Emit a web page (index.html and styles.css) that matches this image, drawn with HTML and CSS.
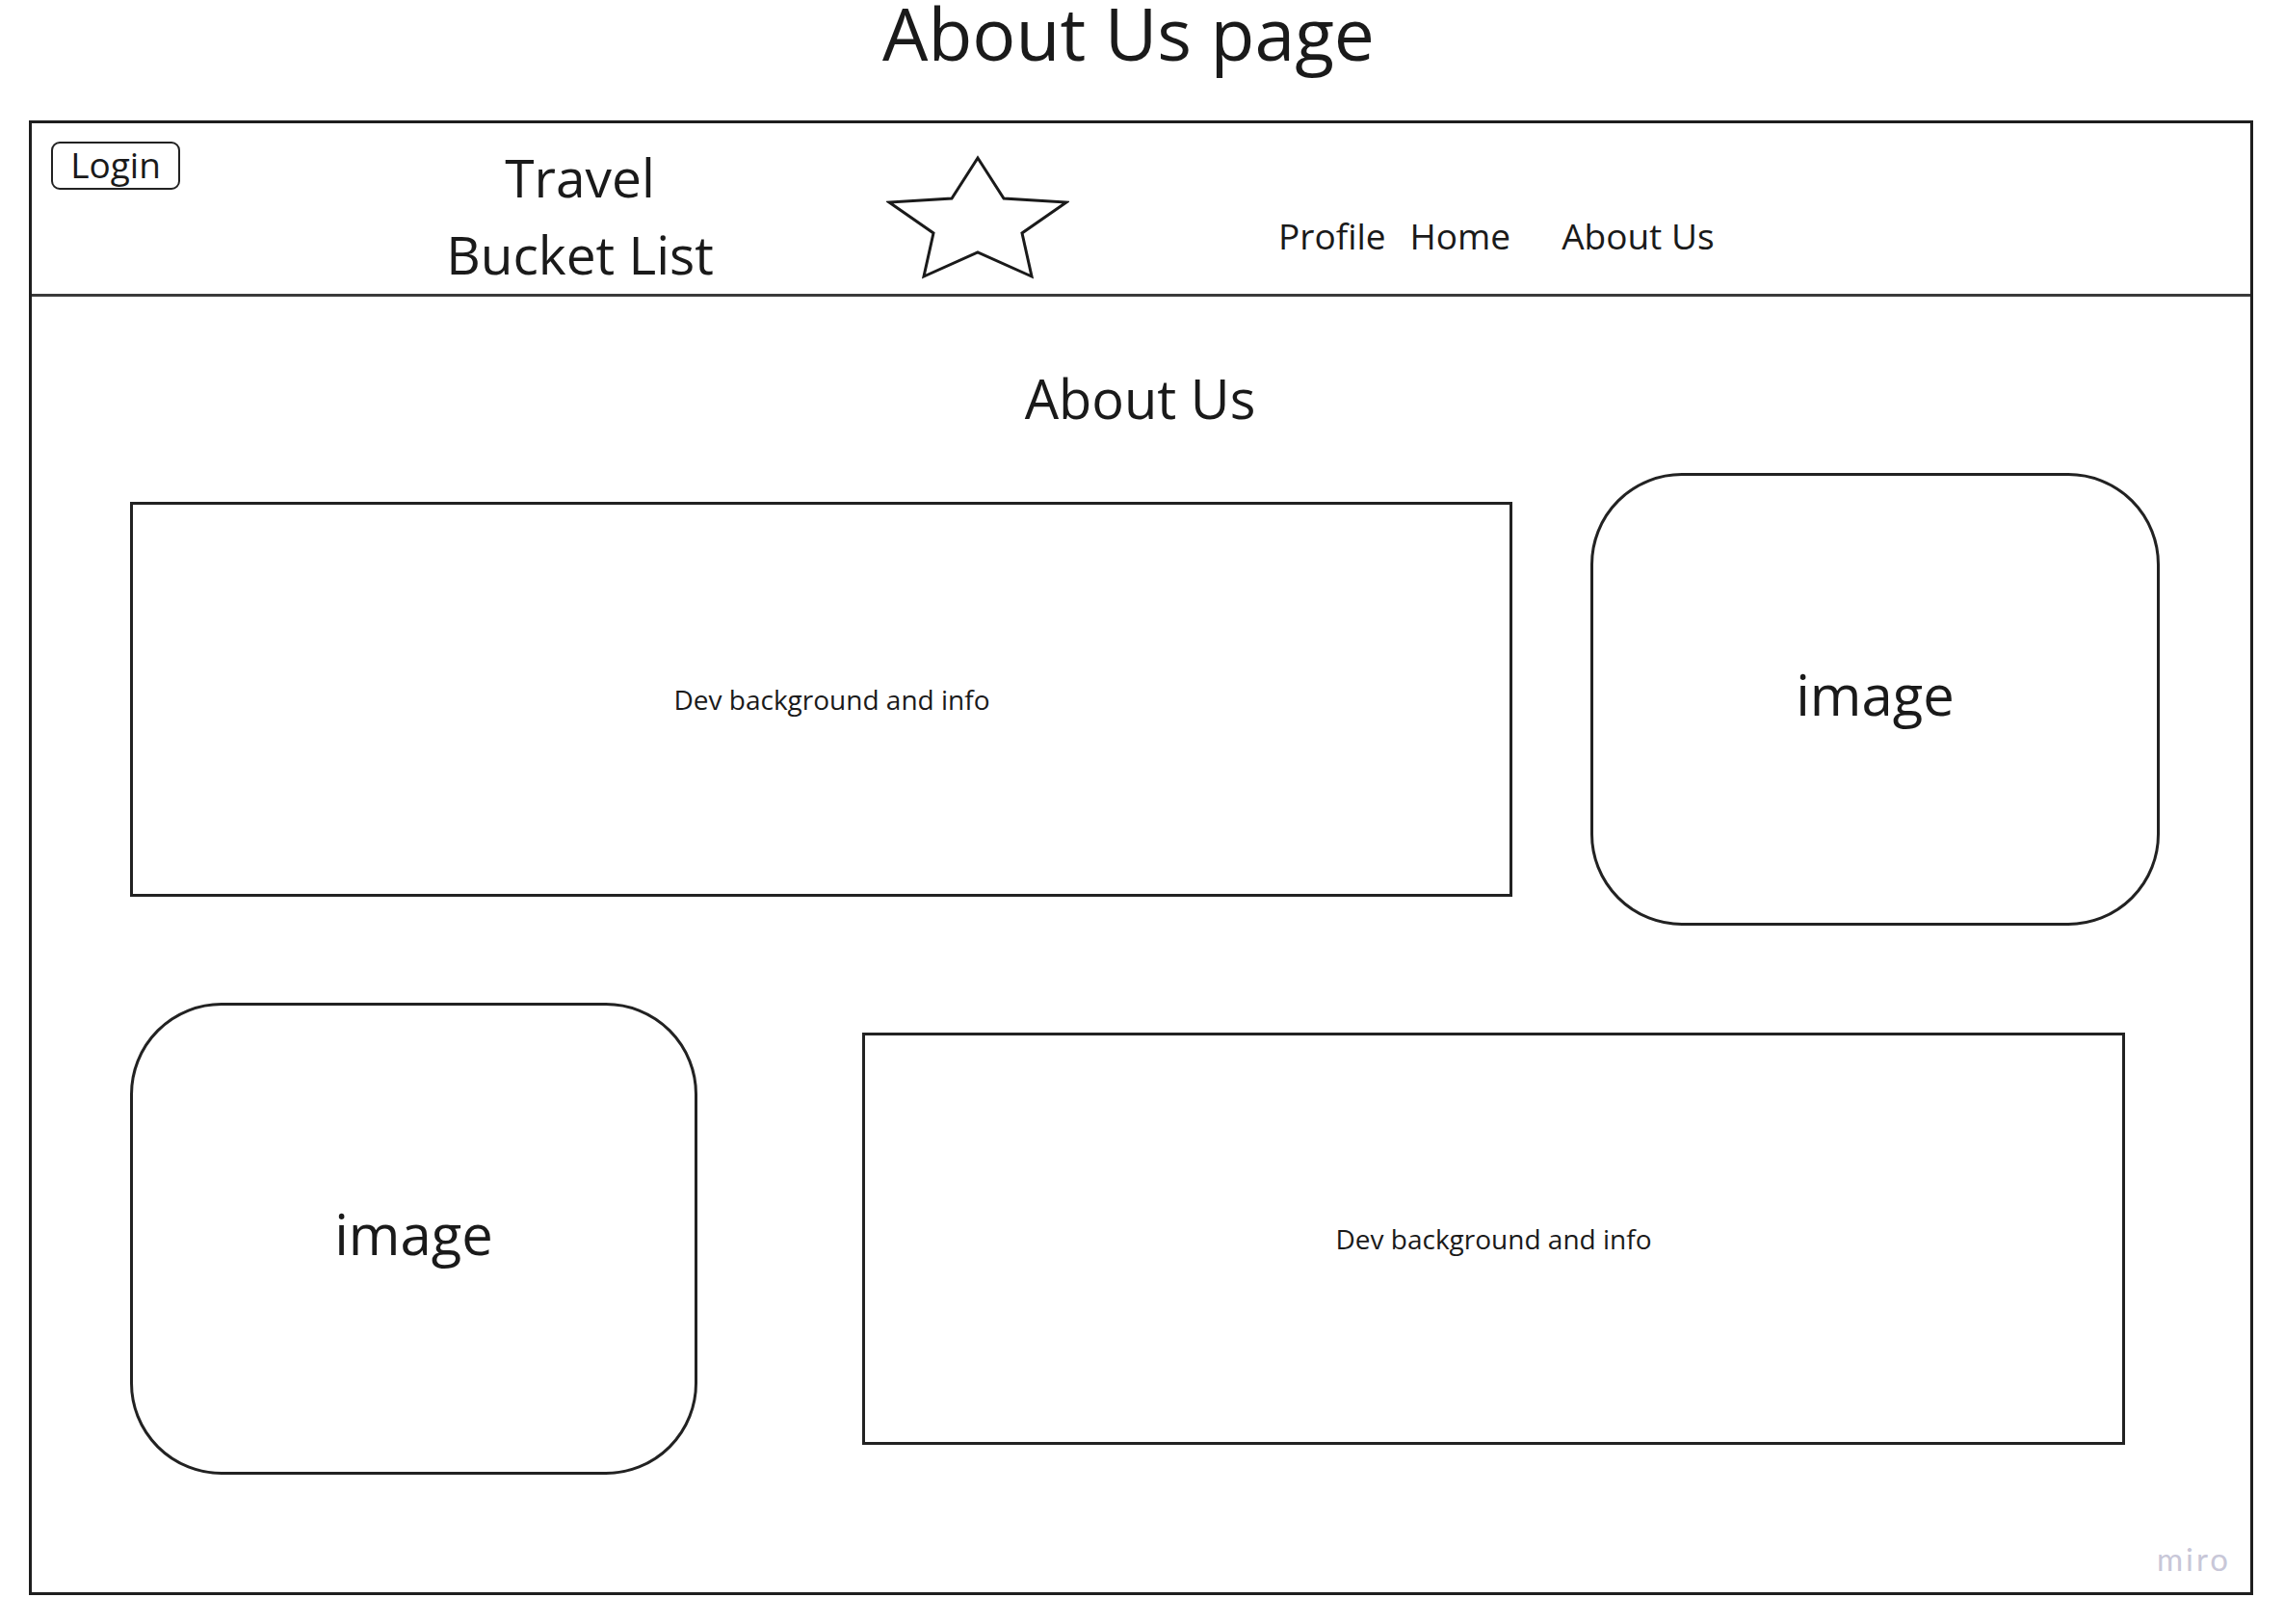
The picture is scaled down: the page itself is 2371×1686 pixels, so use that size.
FILE: index.html
```html
<!DOCTYPE html>
<html lang="en">
  <head>
    <meta charset="UTF-8" />
    <meta name="viewport" content="width=device-width, initial-scale=1.0" />
    <title>About Us page</title>
    <link rel="stylesheet" href="styles.css">
  </head>
  <body>
    <h1 class="page-title">About Us page</h1>

    <!-- Wireframe of the page -->
    <div class="wireframe">
      <header class="site-header">
        <button class="login-btn">Login</button>
        <div class="brand">Travel<br>Bucket List</div>
        <svg class="logo-star" width="190" height="130" viewBox="0 0 190 130">
          <polygon points="95,3 122,45 187,49 141,81 151,126 95,101 39,126 49,81 3,49 68,45" />
        </svg>
        <nav class="main-nav">
          <a href="#">Profile</a>
          <a href="#">Home</a>
          <a href="#" class="current">About Us</a>
        </nav>
      </header>

      <main class="about">
        <h2 class="about-title">About Us</h2>
        <div class="about-row row-one">
          <div class="info-box info-wide">Dev background and info</div>
          <div class="image-box">image</div>
        </div>
        <div class="about-row row-two">
          <div class="image-box image-tall">image</div>
          <div class="info-box info-right">Dev background and info</div>
        </div>
      </main>

      <span class="miro">miro</span>
    </div>
  </body>
</html>
```

FILE: styles.css
```css
/* Base */
body {
  margin: 0;
  background: #fff;
  color: #1a1a1a;
  font-family: "Open Sans", "Noto Sans", sans-serif;
}

.page-title {
  margin: 0;
  padding-right: 28px;
  font-size: 75px;
  font-weight: 400;
  line-height: 68px;
  text-align: center;
}

/* Outer frame */
.wireframe {
  position: relative;
  box-sizing: border-box;
  width: 2309px;
  height: 1531px;
  margin: 57px 0 0 30px;
  border: 3px solid #1e1e1e;
}

/* Header */
.site-header {
  display: flex;
  align-items: flex-start;
  height: 177px;
  border-bottom: 3px solid #3a3a3a;
}

.login-btn {
  box-sizing: border-box;
  width: 134px;
  height: 50px;
  margin: 19px 0 0 20px;
  padding: 0 0 2px;
  border: 2px solid #222;
  border-radius: 9px;
  background: #fff;
  color: #1a1a1a;
  font-family: inherit;
  font-size: 37px;
  line-height: 42px;
}

.brand {
  width: 300px;
  margin: 16px 0 0 265px;
  font-size: 55px;
  line-height: 80px;
  text-align: center;
}

.logo-star {
  display: block;
  margin: 33px 0 0 168px;
}

.logo-star polygon {
  fill: #fff;
  stroke: #1a1a1a;
  stroke-width: 3;
}

.main-nav {
  display: flex;
  gap: 25px;
  margin: 92px 0 0 217px;
}

.main-nav a {
  color: #1a1a1a;
  text-decoration: none;
  font-size: 37px;
  line-height: 50px;
}

.main-nav a.current {
  margin-left: 28px;
}

/* About section */
.about {
  padding: 66px 94px 0 102px;
}

.about-title {
  margin: 0;
  padding-right: 10px;
  font-size: 56px;
  font-weight: 400;
  line-height: 78px;
  text-align: center;
}

.about-row {
  display: flex;
  align-items: center;
}

.row-one {
  justify-content: space-between;
  margin-top: 39px;
}

.row-two {
  gap: 171px;
  margin-top: 80px;
}

.info-box {
  box-sizing: border-box;
  display: flex;
  justify-content: center;
  align-items: center;
  border: 3px solid #222;
  font-size: 28px;
}

.info-wide {
  width: 1435px;
  height: 410px;
  padding-left: 22px;
}

.info-right {
  width: 1311px;
  height: 428px;
}

.image-box {
  box-sizing: border-box;
  display: flex;
  justify-content: center;
  align-items: center;
  width: 591px;
  height: 470px;
  padding-bottom: 12px;
  border: 3px solid #222;
  border-radius: 95px;
  font-size: 58px;
}

.image-tall {
  width: 589px;
  height: 490px;
}

/* Board watermark */
.miro {
  position: absolute;
  right: 20px;
  bottom: 18px;
  color: #c8c7d8;
  font-family: Lato, "Open Sans", sans-serif;
  font-size: 33px;
  font-weight: 400;
  letter-spacing: 3px;
  line-height: 1;
}
```
